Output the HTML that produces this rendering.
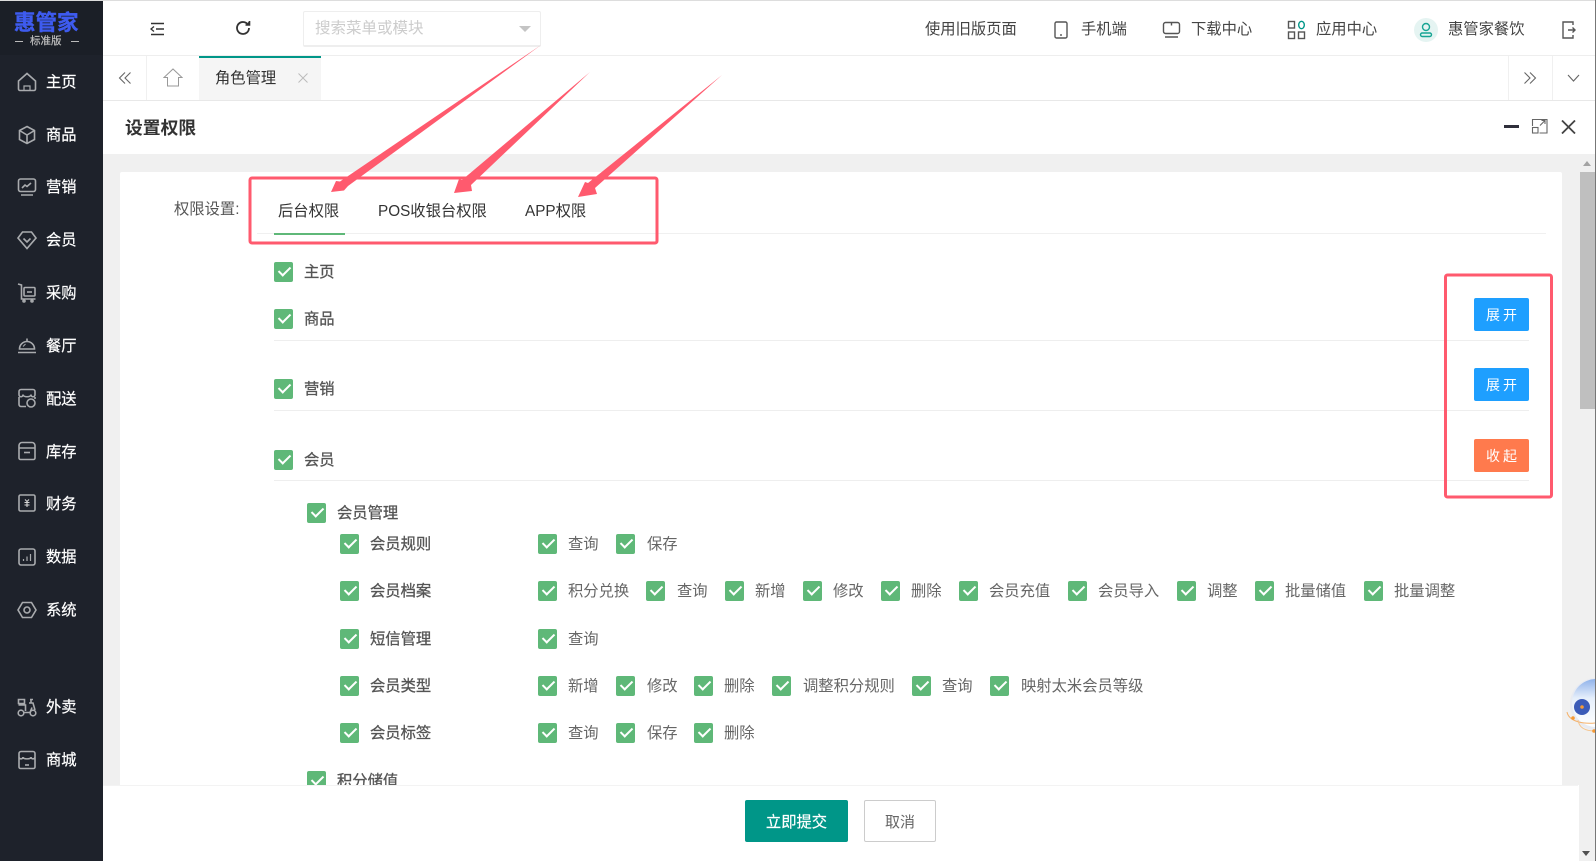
<!DOCTYPE html>
<html lang="zh">
<head>
<meta charset="utf-8">
<title>设置权限</title>
<style>
html,body{margin:0;padding:0;width:1596px;height:861px;overflow:hidden;background:#fff;font-family:"Liberation Sans","Noto Sans CJK SC",sans-serif;}
#root{position:relative;width:1596px;height:861px;overflow:hidden;background:#fff;}
.a{position:absolute;white-space:nowrap;}
.side{position:absolute;left:0;top:1px;width:103px;height:860px;background:#1e222b;}
.logo{position:absolute;left:0;top:0;width:103px;height:54px;background:#1b1f27;}
.m{position:absolute;left:46px;margin-top:1px;color:#fff;font-size:15.3px;line-height:20px;white-space:nowrap;-webkit-text-stroke:.2px #fff;}
.ic{position:absolute;left:17px;width:20px;height:20px;fill:none;stroke:#a9abae;stroke-width:1.6;}
.t{position:absolute;margin-top:1px;color:#555;font-size:15.3px;line-height:20px;white-space:nowrap;}
.cb{position:absolute;width:19px;height:20px;background:#5fb878;border-radius:2px;}
.cb:after{content:"";position:absolute;left:6.5px;top:1.5px;width:5px;height:10px;border-right:2px solid #fff;border-bottom:2px solid #fff;transform:rotate(45deg);}
.l{position:absolute;margin-top:2px;margin-left:-1px;color:#555;font-size:15.3px;line-height:20px;white-space:nowrap;-webkit-text-stroke:.3px #555;}
.v{position:absolute;margin-top:1px;color:#666;font-size:15.3px;line-height:20px;white-space:nowrap;}
.hr{position:absolute;left:274px;width:1255px;height:1px;background:#eee;}
.btn{position:absolute;left:1474px;width:55px;height:33px;box-sizing:border-box;padding-left:3px;padding-top:1px;border-radius:2px;color:#fff;font-size:14px;line-height:33px;text-align:center;letter-spacing:3px;}
.hi{position:absolute;fill:none;stroke:#555;stroke-width:1.4;}
</style>
</head>
<body>
<div id="root">
<div class="a" style="left:0;top:0;width:1596px;height:1px;background:#ddd"></div>

<!-- header -->
<svg class="a" style="left:148px;top:20px" width="18" height="18" viewBox="0 0 18 18" fill="none" stroke="#333" stroke-width="1.6"><path d="M3 3.5H16M8 9H16M3 14.5H16"/><path d="M6 6.5L3 9l3 2.5" stroke-width="1.3"/></svg>
<svg class="a" style="left:234px;top:19px" width="18" height="18" viewBox="0 0 18 18" fill="none" stroke="#333" stroke-width="1.8"><path d="M15 9a6 6 0 1 1-1.9-4.4"/><path d="M15.5 2v4h-4" stroke-width="1.6" fill="#333"/></svg>
<div class="a" style="left:303px;top:11px;width:236px;height:33px;border:1px solid #eee;border-bottom-width:2px;border-radius:2px"></div>
<div class="a" style="left:315px;top:18px;font-size:15.5px;line-height:22px;color:#ccc">搜索菜单或模块</div>
<div class="a" style="left:519px;top:26px;width:0;height:0;border-left:6px solid transparent;border-right:6px solid transparent;border-top:6px solid #c4c4c4"></div>

<div class="t" style="left:925px;top:19px;color:#444">使用旧版页面</div>
<svg class="hi" style="left:1053px;top:21px" width="16" height="18" viewBox="0 0 16 18"><rect x="2" y="1" width="12" height="16" rx="1.5"/><path d="M7 14h2"/></svg>
<div class="t" style="left:1081px;top:19px;color:#444">手机端</div>
<svg class="hi" style="left:1162px;top:21px" width="19" height="18" viewBox="0 0 19 18"><rect x="1.500" y="1.500" width="16" height="11" rx="2"/><path d="M9.500 1.500v3M3 16h13"/></svg>
<div class="t" style="left:1191px;top:19px;color:#444">下载中心</div>
<svg class="hi" style="left:1287px;top:20px" width="19" height="20" viewBox="0 0 19 20"><rect x="1.500" y="1.500" width="6" height="6.500"/><rect x="1.500" y="12" width="6" height="6.500"/><rect x="11.500" y="12" width="6" height="6.500"/><ellipse cx="14.500" cy="5" rx="2.800" ry="3.700" stroke="#009688"/></svg>
<div class="t" style="left:1316px;top:19px;color:#444">应用中心</div>
<div class="a" style="left:1414px;top:18px;width:24px;height:24px;border-radius:50%;background:#e5f4f2"></div>
<svg class="a" style="left:1418px;top:22px" width="16" height="16" viewBox="0 0 16 16" fill="none" stroke="#17a594" stroke-width="1.400"><circle cx="8" cy="5" r="3.500"/><rect x="2.500" y="11" width="11" height="3.500" rx="1.700"/></svg>
<div class="t" style="left:1448px;top:19px;color:#444">惠管家餐饮</div>
<svg class="hi" style="left:1561px;top:20px" width="16" height="20" viewBox="0 0 16 20"><path d="M12 5V2H2v16h10v-3"/><path d="M7 10h7M11.500 7.500L14 10l-2.500 2.500"/></svg>

<!-- tab bar -->
<div class="a" style="left:103px;top:55px;width:1493px;height:1px;background:#eee"></div>
<div class="a" style="left:103px;top:100px;width:1493px;height:1px;background:#e8e8e8"></div>
<div class="a" style="left:146px;top:56px;width:1px;height:44px;background:#f0f0f0"></div>
<div class="a" style="left:1508px;top:56px;width:1px;height:44px;background:#f0f0f0"></div>
<div class="a" style="left:1552px;top:56px;width:1px;height:44px;background:#f0f0f0"></div>
<svg class="a" style="left:118px;top:71px" width="14" height="14" viewBox="0 0 14 14" fill="none" stroke="#666" stroke-width="1.100"><path d="M7 1.500L1.500 7 7 12.500M12.500 1.500L7 7l5.500 5.500"/></svg>
<svg class="a" style="left:163px;top:68px" width="20" height="19" viewBox="0 0 20 19" fill="none" stroke="#999" stroke-width="1"><path d="M1 9.500L10 1l9 8.500h-3.500V18h-11V9.500z"/></svg>
<div class="a" style="left:199px;top:56px;width:122px;height:44px;background:#f5f5f5"></div>
<div class="a" style="left:199px;top:56px;width:122px;height:2px;background:#009688"></div>
<div class="t" style="left:215px;top:68px;color:#333">角色管理</div>
<svg class="a" style="left:298px;top:73px" width="10" height="10" viewBox="0 0 10 10" fill="none" stroke="#bbb" stroke-width="1"><path d="M.5.500l9 9M9.500.500l-9 9"/></svg>
<svg class="a" style="left:1523px;top:71px" width="14" height="14" viewBox="0 0 14 14" fill="none" stroke="#666" stroke-width="1.100"><path d="M1.500 1.500L7 7l-5.500 5.500M7 1.500L12.500 7 7 12.500"/></svg>
<svg class="a" style="left:1567px;top:73px" width="13" height="10" viewBox="0 0 13 10" fill="none" stroke="#666" stroke-width="1.100"><path d="M1 2l5.500 6L12 2"/></svg>

<!-- title -->
<div class="a" style="left:125px;top:115px;font-size:17.800px;line-height:26px;font-weight:700;color:#333">设置权限</div>
<div class="a" style="left:1504px;top:125px;width:15px;height:3px;background:#2f2f3b"></div>
<svg class="a" style="left:1531px;top:118px" width="17" height="16" viewBox="0 0 17 16" fill="none" stroke="#666" stroke-width="1.100"><path d="M1.500 8V1.500H16V15H8.500"/><rect x="1.500" y="9.500" width="5.500" height="5.500"/><path d="M9 7.500L14 2.500M10.500 2.500H14V6"/></svg>
<svg class="a" style="left:1561px;top:120px" width="15" height="14" viewBox="0 0 15 14" fill="none" stroke="#444" stroke-width="1.800"><path d="M1 .5l13 13M14 .5l-13 13"/></svg>

<!-- content bg -->
<div class="a" style="left:103px;top:154px;width:1493px;height:631px;background:#f0f0f0"></div>
<div class="a" style="left:120px;top:172px;width:1442px;height:613px;background:#fff;border-radius:2px 2px 0 0"></div>

<!-- permission tabs -->
<div class="t" style="left:174px;top:199px;color:#555">权限设置:</div>
<div class="a" style="left:257px;top:233px;width:1289px;height:1px;background:#f0f0f0"></div>
<div class="t" style="left:278px;top:201px;color:#333">后台权限</div>
<div class="t" style="left:378px;top:201px;color:#333">POS收银台权限</div>
<div class="t" style="left:525px;top:201px;color:#333">APP权限</div>
<div class="a" style="left:274px;top:233px;width:71px;height:2px;background:#5fb878"></div>

<!-- level 1 -->
<div class="cb" style="left:274px;top:262px"></div><div class="l" style="left:305px;top:261px">主页</div>
<div class="cb" style="left:274px;top:309px"></div><div class="l" style="left:305px;top:308px">商品</div>
<div class="hr" style="top:340px"></div>
<div class="cb" style="left:274px;top:379px"></div><div class="l" style="left:305px;top:378px">营销</div>
<div class="hr" style="top:410px"></div>
<div class="cb" style="left:274px;top:450px"></div><div class="l" style="left:305px;top:449px">会员</div>
<div class="hr" style="top:480px"></div>

<div class="btn" style="top:298px;background:#1e9fff">展开</div>
<div class="btn" style="top:368px;background:#1e9fff">展开</div>
<div class="btn" style="top:439px;background:#ff7a4d">收起</div>

<!-- level 2 -->
<div class="cb" style="left:307px;top:503px"></div><div class="l" style="left:338px;top:502px">会员管理</div>

<div class="cb" style="left:340px;top:534px"></div><div class="l" style="left:371px;top:533px">会员规则</div>
<div class="cb" style="left:538px;top:534px"></div><div class="v" style="left:568px;top:534px">查询</div>
<div class="cb" style="left:616px;top:534px"></div><div class="v" style="left:647px;top:534px">保存</div>

<div class="cb" style="left:340px;top:581px"></div><div class="l" style="left:371px;top:580px">会员档案</div>
<div class="cb" style="left:538px;top:581px"></div><div class="v" style="left:568px;top:581px">积分兑换</div>
<div class="cb" style="left:646px;top:581px"></div><div class="v" style="left:677px;top:581px">查询</div>
<div class="cb" style="left:725px;top:581px"></div><div class="v" style="left:755px;top:581px">新增</div>
<div class="cb" style="left:803px;top:581px"></div><div class="v" style="left:833px;top:581px">修改</div>
<div class="cb" style="left:881px;top:581px"></div><div class="v" style="left:911px;top:581px">删除</div>
<div class="cb" style="left:959px;top:581px"></div><div class="v" style="left:989px;top:581px">会员充值</div>
<div class="cb" style="left:1068px;top:581px"></div><div class="v" style="left:1098px;top:581px">会员导入</div>
<div class="cb" style="left:1177px;top:581px"></div><div class="v" style="left:1207px;top:581px">调整</div>
<div class="cb" style="left:1255px;top:581px"></div><div class="v" style="left:1285px;top:581px">批量储值</div>
<div class="cb" style="left:1364px;top:581px"></div><div class="v" style="left:1394px;top:581px">批量调整</div>

<div class="cb" style="left:340px;top:629px"></div><div class="l" style="left:371px;top:628px">短信管理</div>
<div class="cb" style="left:538px;top:629px"></div><div class="v" style="left:568px;top:629px">查询</div>

<div class="cb" style="left:340px;top:676px"></div><div class="l" style="left:371px;top:675px">会员类型</div>
<div class="cb" style="left:538px;top:676px"></div><div class="v" style="left:568px;top:676px">新增</div>
<div class="cb" style="left:616px;top:676px"></div><div class="v" style="left:647px;top:676px">修改</div>
<div class="cb" style="left:694px;top:676px"></div><div class="v" style="left:724px;top:676px">删除</div>
<div class="cb" style="left:772px;top:676px"></div><div class="v" style="left:803px;top:676px">调整积分规则</div>
<div class="cb" style="left:912px;top:676px"></div><div class="v" style="left:942px;top:676px">查询</div>
<div class="cb" style="left:990px;top:676px"></div><div class="v" style="left:1021px;top:676px">映射太米会员等级</div>

<div class="cb" style="left:340px;top:723px"></div><div class="l" style="left:371px;top:722px">会员标签</div>
<div class="cb" style="left:538px;top:723px"></div><div class="v" style="left:568px;top:723px">查询</div>
<div class="cb" style="left:616px;top:723px"></div><div class="v" style="left:647px;top:723px">保存</div>
<div class="cb" style="left:694px;top:723px"></div><div class="v" style="left:724px;top:723px">删除</div>

<div class="cb" style="left:307px;top:771px"></div><div class="l" style="left:338px;top:770px">积分储值</div>

<!-- robot -->
<svg class="a" style="left:1564px;top:670px" width="31" height="70" viewBox="0 0 31 70">
<defs>
<linearGradient id="g" x1="0" y1="0" x2="0" y2="1"><stop offset="0" stop-color="#8fb2ea"/><stop offset=".4" stop-color="#e6effb"/><stop offset="1" stop-color="#fff"/></linearGradient>
</defs>
<circle cx="32" cy="34" r="26" fill="#dfe6f3" opacity=".5"/>
<circle cx="32" cy="33" r="24" fill="url(#g)"/>
<circle cx="18" cy="37" r="8" fill="#3b5bb8"/>
<circle cx="18" cy="37" r="1.800" fill="#f59a36"/>
<path d="M3 42C5 52 20 54 31 53" fill="none" stroke="#f5b26b" stroke-width="1"/>
<path d="M14 50c1 8 8 11 17 11" fill="none" stroke="#f5c48d" stroke-width="1"/>
<circle cx="9" cy="48" r="1.800" fill="#f59a36"/><circle cx="30" cy="61" r="1.800" fill="#f59a36"/>
</svg>

<!-- scrollbar -->
<div class="a" style="left:1580px;top:172px;width:15px;height:237px;background:#bfbfbf"></div>
<div class="a" style="left:1583px;top:161px;width:0;height:0;border-left:4px solid transparent;border-right:4px solid transparent;border-bottom:5px solid #a3a3a3"></div>
<div class="a" style="left:1579px;top:785px;width:16px;height:76px;background:#f0f0f0"></div>
<div class="a" style="left:1582px;top:851px;width:0;height:0;border-left:4px solid transparent;border-right:4px solid transparent;border-top:5px solid #505050"></div>
<div class="a" style="left:1595px;top:0;width:1px;height:861px;background:#777"></div>

<!-- footer -->
<div class="a" style="left:103px;top:785px;width:1475px;height:76px;background:#fff;border-top:1px solid #f3f3f3;box-sizing:border-box"></div>
<div class="a" style="left:745px;top:800px;width:103px;height:42px;padding-top:2px;box-sizing:border-box;background:#009688;border-radius:2px;color:#fff;font-size:15.3px;line-height:42px;text-align:center;-webkit-text-stroke:.2px #fff">立即提交</div>
<div class="a" style="left:864px;top:800px;width:72px;height:42px;padding-top:2px;box-sizing:border-box;border:1px solid #ccc;border-radius:2px;color:#666;font-size:15px;line-height:39px;text-align:center;background:#fff">取消</div>

<!-- sidebar -->
<div class="side">
  <div class="logo"></div>
  <div class="a" style="left:14px;top:9px;font-size:21.500px;line-height:26px;font-weight:700;color:#3e5bef;-webkit-text-stroke:.4px #3e5bef">惠管家</div>
  <div class="a" style="left:15px;top:40px;width:8px;height:1px;background:#bbb"></div>
  <div class="a" style="left:30px;top:33px;font-size:10.500px;line-height:15px;color:#c0c0c0;-webkit-text-stroke:.2px #c0c0c0">标准版</div>
  <div class="a" style="left:71px;top:40px;width:8px;height:1px;background:#bbb"></div>

  <svg class="ic" style="top:71px" viewBox="0 0 20 20"><path d="M1.500 9L10 1.500 18.500 9v8a1.500 1.500 0 0 1-1.500 1.500H3A1.500 1.500 0 0 1 1.500 17z"/><path d="M7 18v-4h6v4" stroke-width="1.200"/></svg>
  <div class="m" style="top:71px">主页</div>

  <svg class="ic" style="top:124px" viewBox="0 0 20 20"><path d="M10 1.500l7.500 4v9l-7.500 4-7.500-4v-9z"/><path d="M2.500 5.500L10 10l7.500-4.500M10 10v8.500"/></svg>
  <div class="m" style="top:124px">商品</div>

  <svg class="ic" style="top:176px" viewBox="0 0 20 20"><rect x="1.500" y="2" width="17" height="12.500" rx="2"/><path d="M5 11l3-3 2 1.500 4-3.500M4 18h12" /></svg>
  <div class="m" style="top:176px">营销</div>

  <svg class="ic" style="top:229px" viewBox="0 0 20 20"><path d="M5.500 2h9L19 8 10 18.500 1 8z"/><path d="M6.500 8.500l3.500 3.500 3.500-3.500"/></svg>
  <div class="m" style="top:229px">会员</div>

  <svg class="ic" style="top:282px" viewBox="0 0 20 20"><path d="M1 1l3.500 1v14h14"/><rect x="7" y="4.500" width="11" height="8.500" rx="1"/><path d="M10 9h5"/><circle cx="7" cy="18" r="1"/><circle cx="15" cy="18" r="1"/></svg>
  <div class="m" style="top:282px">采购</div>

  <svg class="ic" style="top:334px" viewBox="0 0 20 20"><path d="M2.500 14a7.500 7.500 0 0 1 15 0zM10 6.500V3.500M1 17.500h18"/><path d="M6 11.500l2.500-2.500" stroke-width="1"/></svg>
  <div class="m" style="top:335px">餐厅</div>

  <svg class="ic" style="top:387px" viewBox="0 0 20 20"><path d="M2 6.500V3.500A2 2 0 0 1 4 1.500h12a2 2 0 0 1 2 2v3M2 6.500c0 3 4 3 4 0 0 3 8 3 8 0 0 3 4 3 4 0M2 9v7.500a2 2 0 0 0 2 2h5M18 9v2"/><circle cx="14" cy="15" r="4"/></svg>
  <div class="m" style="top:388px">配送</div>

  <svg class="ic" style="top:440px" viewBox="0 0 20 20"><path d="M2 7V4.500a3 3 0 0 1 3-3h10a3 3 0 0 1 3 3V7M2 7h16v10a1.500 1.500 0 0 1-1.500 1.500h-13A1.500 1.500 0 0 1 2 17z"/><path d="M7 11.500h6"/></svg>
  <div class="m" style="top:441px">库存</div>

  <svg class="ic" style="top:492px" viewBox="0 0 20 20"><rect x="2" y="2" width="16" height="16" rx="1.500"/><path d="M8 6.500l2 2 2-2M7.500 9.500h5M7.500 12h5M10 8.500v5.500" stroke="#d5d5d5" stroke-width="1.100"/></svg>
  <div class="m" style="top:493px">财务</div>

  <svg class="ic" style="top:546px" viewBox="0 0 20 20"><rect x="2" y="2" width="16" height="16" rx="2"/><path d="M6.500 14v-2M10 14V9.500M13.500 14V7" stroke-width="1.200"/></svg>
  <div class="m" style="top:546px">数据</div>

  <svg class="ic" style="top:599px" viewBox="0 0 20 20"><path d="M5.500 2.500h9L19 10l-4.500 7.500h-9L1 10z"/><circle cx="10" cy="10" r="3"/></svg>
  <div class="m" style="top:599px">系统</div>

  <svg class="ic" style="top:696px" viewBox="0 0 20 20"><path d="M1.500 2.500h6v4h-6zM1.500 8h7v6M14 2v4M13 2.500h3M12 6h4l2 7"/><circle cx="4" cy="16" r="2.800"/><circle cx="16" cy="16" r="2.800"/><path d="M7 15.500h6l2-5"/></svg>
  <div class="m" style="top:696px">外卖</div>

  <svg class="ic" style="top:749px" viewBox="0 0 20 20"><path d="M2 7V3.500a2 2 0 0 1 2-2h12a2 2 0 0 1 2 2V7M2 7c0 2.500 4 2.500 4 0 0 2.500 8 2.500 8 0 0 2.500 4 2.500 4 0M2 7v10a1.500 1.500 0 0 0 1.500 1.500h13A1.500 1.500 0 0 0 18 17V7"/><path d="M8 15h4"/></svg>
  <div class="m" style="top:749px">商城</div>
</div>

<!-- annotations -->
<svg class="a" style="left:0;top:0" width="1596" height="861" fill="none">
<rect x="250" y="178" width="407" height="65" rx="2" stroke="#ff5a6e" stroke-width="3"/>
<rect x="1445.500" y="275" width="106" height="222" rx="2" stroke="#ff5a6e" stroke-width="3"/>
<polygon fill="#ff5a6e" points="541,45 340,181.500 336,181 331,192 344,190.500 348,186"/>
<polygon fill="#ff5a6e" points="590,72 462,180 459,179 454,193 472,191 471,185"/>
<polygon fill="#ff5a6e" points="722,75 588,183 585,182 578,197 597,194 595,188"/>
</svg>
</div>
</body>
</html>
